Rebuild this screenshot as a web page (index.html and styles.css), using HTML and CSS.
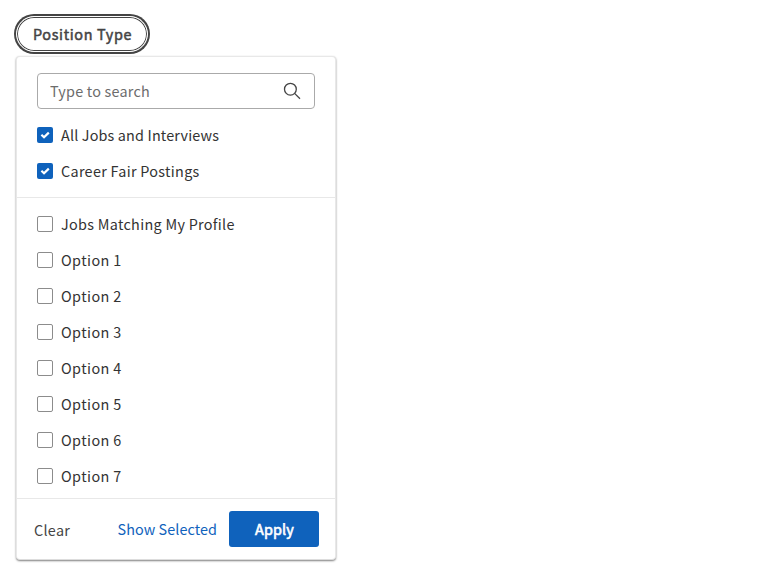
FILE: index.html
```html
<!DOCTYPE html>
<html lang="en">
<head>
<meta charset="utf-8">
<title>Position Type</title>
<link rel="stylesheet" href="styles.css">
</head>
<body>
<button class="pill" type="button">Position Type</button>
<div class="panel">
  <div class="top">
    <div class="search">
      <input class="search-input" type="text" placeholder="Type to search" aria-label="Search">
      <svg class="search-icon" viewBox="0 0 18 18"><circle cx="7.4" cy="7.2" r="5.9"/><path d="M11.6 11.4L17 16.8"/></svg>
    </div>
    <label class="option tight"><span class="box checked"><svg viewBox="0 0 16 16"><path d="M4.4 7.8L7 10.2L11.8 5.6"/></svg></span>All Jobs and Interviews</label>
    <label class="option"><span class="box checked"><svg viewBox="0 0 16 16"><path d="M4.4 7.8L7 10.2L11.8 5.6"/></svg></span>Career Fair Postings</label>
  </div>
  <div class="list">
    <label class="option"><span class="box"></span>Jobs Matching My Profile</label>
    <label class="option wide"><span class="box"></span>Option 1</label>
    <label class="option wide"><span class="box"></span>Option 2</label>
    <label class="option wide"><span class="box"></span>Option 3</label>
    <label class="option wide"><span class="box"></span>Option 4</label>
    <label class="option wide"><span class="box"></span>Option 5</label>
    <label class="option wide"><span class="box"></span>Option 6</label>
    <label class="option wide"><span class="box"></span>Option 7</label>
  </div>
  <div class="footer">
    <button class="clear" type="button">Clear</button>
    <button class="show" type="button">Show Selected</button>
    <button class="apply" type="button">Apply</button>
  </div>
</div>
</body>
</html>
```
FILE: styles.css
```css
* { box-sizing: border-box; }
body {
  margin: 0;
  padding: 16px;
  background: #fff;
  color: #333;
  font: 14.4px/20px "Source Sans Pro", "Noto Sans CJK SC", sans-serif;
  letter-spacing: 0.3px;
}
button {
  font: inherit;
  letter-spacing: inherit;
  border: 0;
  padding: 0;
  background: none;
}
.pill {
  display: block;
  width: 132px;
  height: 36px;
  border: 1px solid #fff;
  border-radius: 18px;
  background: #fff;
  color: #444;
  -webkit-text-stroke: 0.5px currentColor;
  letter-spacing: 0.65px;
  padding-left: 1px;
  box-shadow: inset 0 0 0 1px #444, 0 0 0 2px #444;
}
.panel {
  width: 320px;
  height: 504px;
  margin-top: 4px;
  border: 1px solid #e8e8e8;
  border-bottom-color: #ddd;
  border-radius: 4px;
  background: #fff;
  box-shadow: 0 1px 2px rgba(0, 0, 0, 0.5);
}
.top {
  height: 141px;
  padding: 16px 20px 0;
  border-bottom: 1px solid #e8e8e8;
}
.search {
  display: flex;
  align-items: center;
  height: 36px;
  margin-bottom: 8px;
  padding: 0 13px 0 12px;
  border: 1px solid #aaa;
  border-radius: 4px;
}
.search-input {
  flex: 1;
  min-width: 0;
  padding: 0;
  border: 0;
  outline: 0;
  background: none;
  font: inherit;
  letter-spacing: 0.22px;
}
.search-input::placeholder { color: #6c6c6c; }
.search-icon { width: 18px; height: 18px; fill: none; stroke: #444; stroke-width: 1.3; }
.option { display: flex; align-items: center; gap: 8px; height: 36px; letter-spacing: 0.3px; }
.tight { letter-spacing: 0.16px; }
.wide { letter-spacing: 0.42px; }
.box {
  width: 16px;
  height: 16px;
  border: 1px solid #8c8c8c;
  border-radius: 2px;
  background: #fff;
}
.checked { border: 0; background: #0f62bc; }
.checked svg { display: block; width: 16px; height: 16px; fill: none; stroke: #fff; stroke-width: 2.2; }
.list { height: 301px; padding: 8px 20px 0; border-bottom: 1px solid #e8e8e8; }
.footer { display: flex; align-items: center; height: 60px; padding: 0 16px 0 17px; }
.clear { margin: 2px auto 0 0; color: #444; }
.show { margin-right: 12px; color: #0f62bc; letter-spacing: 0.06px; }
.apply {
  width: 90px;
  height: 36px;
  border-radius: 3px;
  background: #0f62bc;
  color: #fff;
  -webkit-text-stroke: 0.6px currentColor;
  letter-spacing: 0.15px;
  padding-left: 1px;
}
```
